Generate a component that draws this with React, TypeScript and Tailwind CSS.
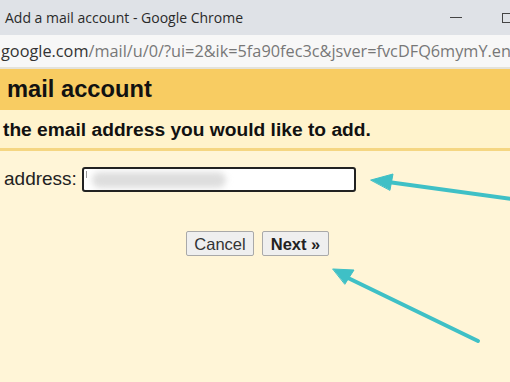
export default function App() {
  return (
    <div className="relative w-[510px] h-[382px] overflow-hidden bg-[#fff5d7] font-['Liberation_Sans',Arial,sans-serif] text-[#111]">
      {/* window title bar */}
      <div className="h-[35px] bg-[#dfe2e7] flex items-center justify-between pl-[5px] pr-0">
        <span className="font-['Open_Sans',sans-serif] text-[14px] text-[#2a2a2a]">Add a mail account - Google Chrome</span>
        <div className="flex items-center gap-[40px]">
          <div className="w-[12px] h-[1px] bg-[#444]" />
          <div className="w-[10px] h-[10px] border border-[#444] mr-[-2px]" />
        </div>
      </div>

      {/* url bar */}
      <div className="h-[34px] bg-[#f7f7f7] border-b-2 border-[#e4e2da] flex items-center pl-px whitespace-nowrap">
        <span className="font-['Open_Sans',sans-serif] text-[16.3px] text-[#333]">
          google.com
          <span className="text-[#777]">/mail/u/0/?ui=2&amp;ik=5fa90fec3c&amp;jsver=fvcDFQ6mymY.en</span>
        </span>
      </div>

      {/* header */}
      <div className="h-[41px] bg-[#f8cc62] flex items-center pl-[7px]">
        <h1 className="text-[23.7px] font-bold">mail account</h1>
      </div>
      <div className="h-[41px] bg-[#fff3cc] border-b-[3px] border-[#f5d682] flex items-center pl-[3px] pt-[2px]">
        <p className="text-[19.2px] font-bold">the email address you would like to add.</p>
      </div>

      {/* form */}
      <div className="flex items-center gap-[5px] pl-[4px] pt-[14px]">
        <label className="text-[19px] text-[#222]">address:</label>
        <div className="relative w-[274px] h-[25px] bg-white border-2 border-[#222] rounded-[3px] overflow-hidden">
          <div className="absolute left-[2px] top-[2px] w-px h-[7px] bg-[#999]" />
          <div className="absolute left-[8px] top-[3px] w-[134px] h-[16px] bg-[#dedede] blur-[3px] rounded-full" />
        </div>
      </div>

      <div className="flex gap-[8px] pl-[186px] pt-[37px]">
        <button className="w-[68px] h-[25px] bg-[#efefef] border border-[#a9a9a9] rounded-[2px] text-[16.5px] text-[#333]">Cancel</button>
        <button className="w-[67px] h-[25px] bg-[#efefef] border border-[#a9a9a9] rounded-[2px] text-[16.5px] font-bold text-[#222]">Next »</button>
      </div>

      {/* annotation arrows */}
      <svg className="absolute inset-0 pointer-events-none" width="510" height="382">
        <g stroke="#3fc0c6" strokeWidth="4" strokeLinecap="round" fill="#3fc0c6">
          <line x1="388" y1="182" x2="512" y2="199" />
          <polygon points="371,180 393,174 390,190" strokeWidth="1" />
          <line x1="346" y1="277" x2="478" y2="341" />
          <polygon points="333,269 354,270 345,284" strokeWidth="1" />
        </g>
      </svg>
    </div>
  );
}
